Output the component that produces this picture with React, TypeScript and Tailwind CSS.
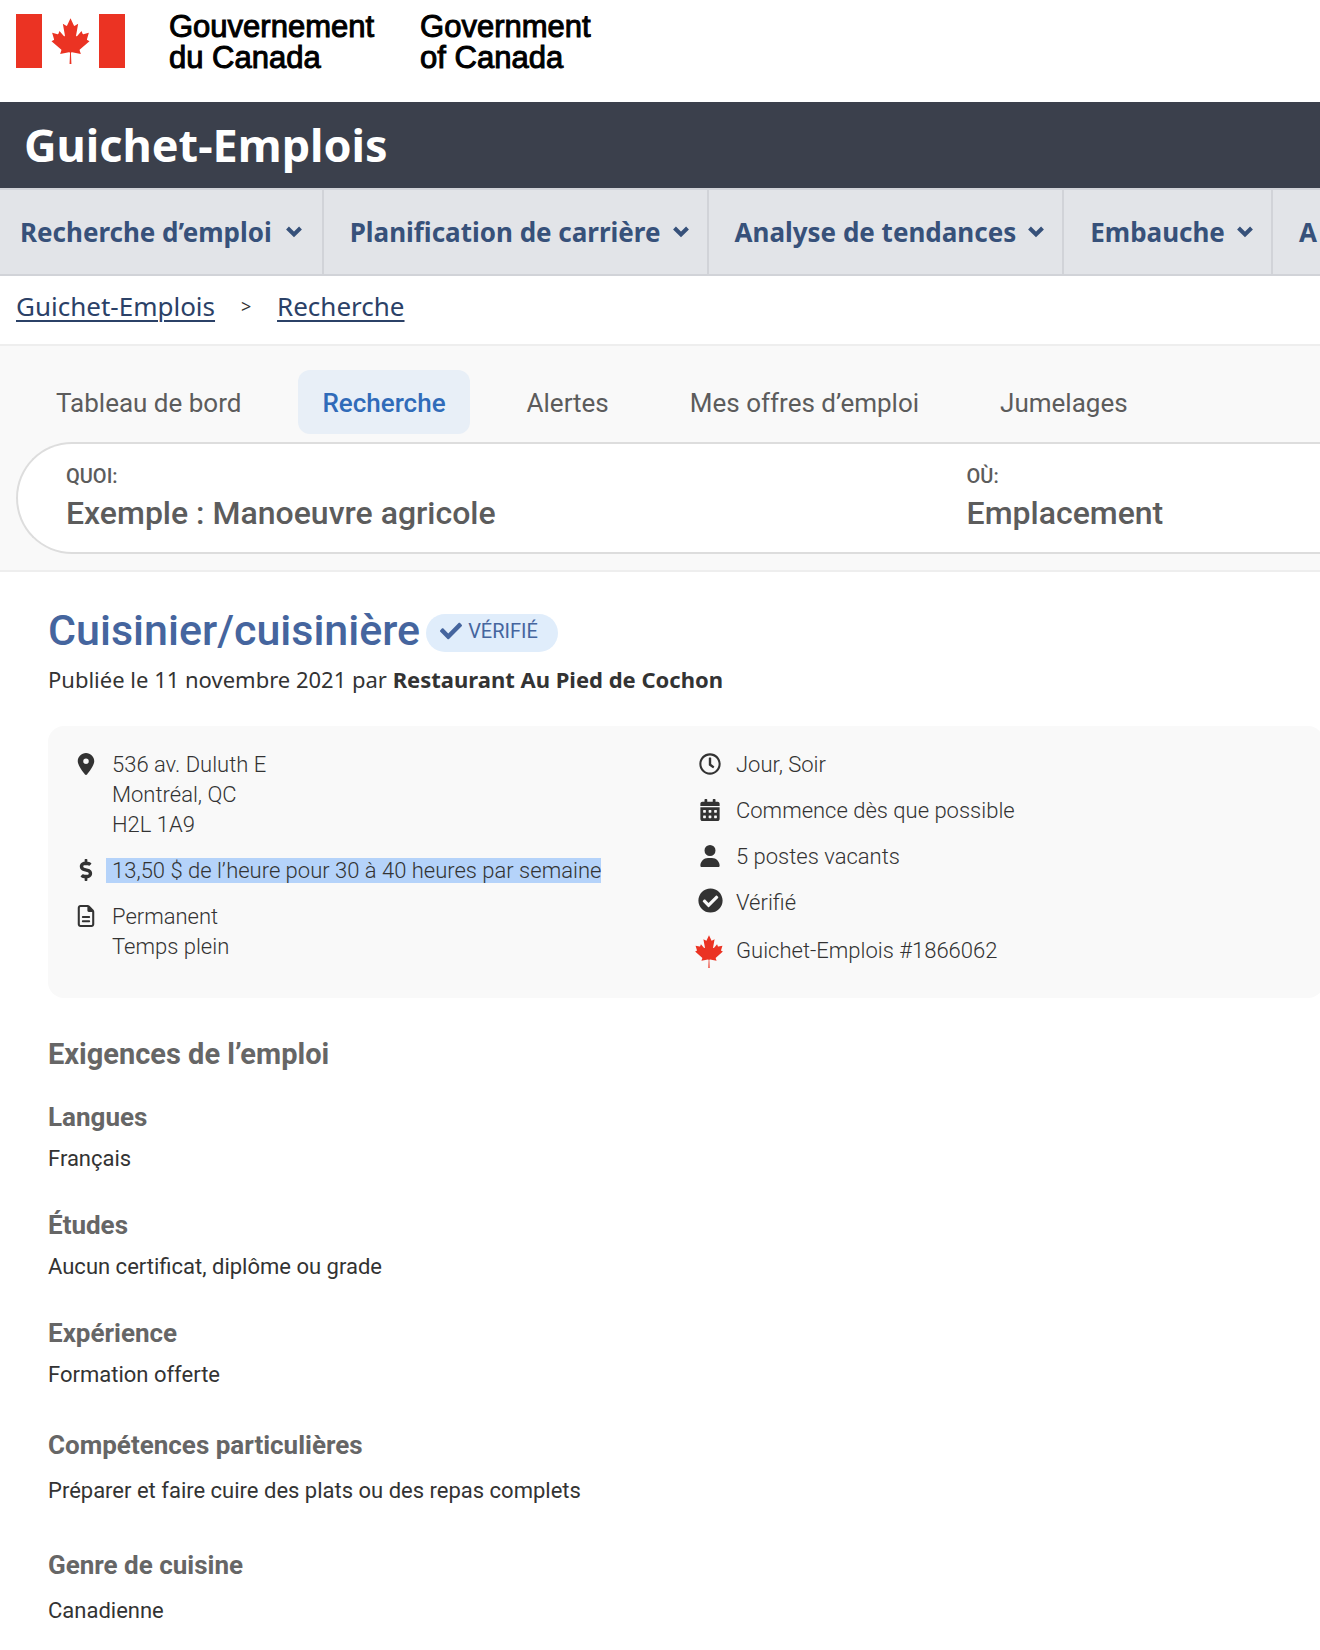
import type { ReactNode } from "react";
import {
  FaCalendarAlt,
  FaCheck,
  FaCheckCircle,
  FaDollarSign,
  FaRegClock,
} from "react-icons/fa";
import { FaLocationDot, FaRegFileLines, FaUser } from "react-icons/fa6";

function MapleLeaf({ className }: { className: string }) {
  return (
    <svg
      viewBox="-2010 -2030 4020 4160"
      preserveAspectRatio="none"
      className={className}
      fill="#eb3323"
      aria-hidden="true"
    >
      <path d="m-90 2130 45-963a95 95 0 0 0-111-98l-859 151 116-320a65 65 0 0 0-20-73l-941-762 212-99a65 65 0 0 0 34-79l-186-572 542 115a65 65 0 0 0 73-38l105-247 423 454a65 65 0 0 0 111-57l-204-1052 327 189a65 65 0 0 0 91-27l332-652 332 652a65 65 0 0 0 91 27l327-189-204 1052a65 65 0 0 0 111 57l423-454 105 247a65 65 0 0 0 73 38l542-115-186 572a65 65 0 0 0 34 79l212 99-941 762a65 65 0 0 0-20 73l116 320-859-151a95 95 0 0 0-111 98l45 963z" />
    </svg>
  );
}

function Chevron() {
  return (
    <svg viewBox="0 0 16 12" className="h-3 w-4 shrink-0" fill="none" stroke="currentColor" strokeWidth="4" aria-hidden="true">
      <path d="M1.5 2 8 8.5 14.5 2" />
    </svg>
  );
}

const menus = ["Recherche d’emploi", "Planification de carrière", "Analyse de tendances", "Embauche", "A"];
const tabs = ["Tableau de bord", "Recherche", "Alertes", "Mes offres d’emploi", "Jumelages"];

const requirements = [
  { title: "Langues", text: "Français", head: "mt-7", body: "mt-[11px]" },
  { title: "Études", text: "Aucun certificat, diplôme ou grade", head: "mt-[35px]", body: "mt-[11px]" },
  { title: "Expérience", text: "Formation offerte", head: "mt-[35px]", body: "mt-[11px]" },
  { title: "Compétences particulières", text: "Préparer et faire cuire des plats ou des repas complets", head: "mt-[39px]", body: "mt-[15px]" },
  { title: "Genre de cuisine", text: "Canadienne", head: "mt-[43px]", body: "mt-[15px]" },
];

function Detail({ icon, children }: { icon: ReactNode; children: ReactNode }) {
  return (
    <li className="flex gap-3">
      <span className="flex h-7 w-7 shrink-0 items-center justify-center">{icon}</span>
      <div>{children}</div>
    </li>
  );
}

function Field({ id, label, placeholder }: { id: string; label: string; placeholder: string }) {
  return (
    <div className="flex min-w-0 flex-col">
      <label htmlFor={id} className="text-[20px] leading-6 font-medium">
        {label}
      </label>
      <input
        id={id}
        type="text"
        placeholder={placeholder}
        className="mt-[5px] h-10 w-full bg-transparent text-[32px] leading-10 font-medium outline-none placeholder:text-[#5c5c5c] placeholder:opacity-100"
      />
    </div>
  );
}

export default function App() {
  return (
    <div className="min-h-screen overflow-x-hidden bg-white pb-6 font-['Roboto',sans-serif] text-[#333]">
      <header>
        <div className="flex h-[102px] items-start px-4 pt-[11px]">
          <div className="mt-[3px] flex h-[54px] w-[109px] items-center justify-between" role="img" aria-label="Drapeau du Canada">
            <span className="h-full w-[26px] bg-[#eb3323]" />
            <MapleLeaf className="h-[46px] w-[41px]" />
            <span className="h-full w-[26px] bg-[#eb3323]" />
          </div>
          <p className="ml-11 font-['Liberation_Sans',sans-serif] text-[31px] leading-[31px] text-black [-webkit-text-stroke:1px_black]">
            Gouvernement
            <br />
            du Canada
          </p>
          <p className="ml-[46px] font-['Liberation_Sans',sans-serif] text-[31px] leading-[31px] text-black [-webkit-text-stroke:1px_black]">
            Government
            <br />
            of Canada
          </p>
        </div>
        <div className="flex h-[86px] items-center bg-[#3b404c] px-6 font-['Noto_Sans',sans-serif] text-[45px] font-bold text-white">
          Guichet-Emplois
        </div>
        <nav aria-label="Menu principal" className="overflow-hidden border-y-2 border-[#d1d3d8] bg-[#e2e4e8]">
          <ul className="flex h-[84px] w-max font-['Noto_Sans',sans-serif] text-[26px] font-bold text-[#37517a]">
            {menus.map((m, i) => (
              <li key={m} className={i === 0 ? "" : "border-l-2 border-[#d1d3d8]"}>
                <button type="button" className={i === 0 ? "flex h-full items-center gap-[14px] pr-5 pl-5" : "flex h-full items-center gap-3 pr-[18px] pl-[26px]"}>
                  {m}
                  <Chevron />
                </button>
              </li>
            ))}
          </ul>
        </nav>
      </header>

      <nav aria-label="Fil d’Ariane" className="flex h-[68px] items-center px-4 pb-2 font-['Noto_Sans',sans-serif] text-[26px] text-[#2b4167]">
        <a href="#accueil" className="underline decoration-2 underline-offset-4">Guichet-Emplois</a>
        <span className="w-[62px] text-center text-[18px] text-[#333]">&gt;</span>
        <a href="#recherche" className="underline decoration-2 underline-offset-4">Recherche</a>
      </nav>

      <section className="border-y-2 border-[#eee] bg-[#f9f9f9] pt-6 pb-4 pl-4 text-[#5c5c5c]">
        <ul className="flex gap-[33px] pl-4 text-[26px]">
          {tabs.map((t) => (
            <li key={t}>
              <button
                type="button"
                className={
                  t === "Recherche"
                    ? "h-16 rounded-xl bg-[#e8eff7] px-6 pt-[2px] font-medium text-[#306bb9]"
                    : "h-16 rounded-xl px-6 pt-[2px]"
                }
              >
                {t}
              </button>
            </li>
          ))}
        </ul>
        <form className="mt-2 grid h-28 grid-cols-[79fr_31fr] rounded-l-full border-2 border-r-0 border-[#ddd] bg-white pt-5 pl-12">
          <Field id="quoi" label="QUOI:" placeholder="Exemple : Manoeuvre agricole" />
          <Field id="ou" label="OÙ:" placeholder="Emplacement" />
        </form>
      </section>

      <main className="pl-12">
        <div className="flex items-center gap-[6px] pt-[31px]">
          <h1 className="text-[43px] leading-[54px] font-medium text-[#45659e]">Cuisinier/cuisinière</h1>
          <span className="mt-[6px] flex h-[38px] items-center gap-[6px] rounded-full bg-[#e0edfb] pr-5 pb-1 pl-[14px] text-[20px] text-[#45659e]">
            <FaCheck className="text-[22px]" />
            VÉRIFIÉ
          </span>
        </div>
        <p className="mt-[6px] font-['Noto_Sans',sans-serif] text-[22px] leading-8">
          Publiée le 11 novembre 2021 par <strong className="font-bold">Restaurant Au Pied de Cochon</strong>
        </p>

        <section className="mt-[31px] -mr-1 grid grid-cols-2 rounded-2xl bg-[#f9f9f9] pt-6 pr-1 pb-[30px] pl-6 text-[22px] leading-[30px] font-light">
          <ul className="flex flex-col gap-4">
            <Detail icon={<FaLocationDot className="text-[22px]" />}>
              536 av. Duluth E
              <br />
              Montréal, QC
              <br />
              H2L 1A9
            </Detail>
            <Detail icon={<FaDollarSign className="text-[22px]" />}>
              <span className="-ml-[6px] bg-[#b5d3fa] pl-[6px]">13,50 $ de l’heure pour 30 à 40 heures par semaine</span>
            </Detail>
            <Detail icon={<FaRegFileLines className="text-[22px]" />}>
              Permanent
              <br />
              Temps plein
            </Detail>
          </ul>
          <ul className="flex flex-col gap-4">
            <Detail icon={<FaRegClock className="text-[22px]" />}>Jour, Soir</Detail>
            <Detail icon={<FaCalendarAlt className="text-[22px]" />}>Commence dès que possible</Detail>
            <Detail icon={<FaUser className="text-[22px]" />}>5 postes vacants</Detail>
            <Detail icon={<FaCheckCircle className="self-start text-[25px]" />}>Vérifié</Detail>
            <li className="flex h-[34px] items-center gap-3">
              <span className="flex w-7 shrink-0 justify-end">
                <MapleLeaf className="h-[33px] w-[30px] shrink-0" />
              </span>
              Guichet-Emplois #1866062
            </li>
          </ul>
        </section>

        <h2 className="mt-9 text-[29px] leading-10 font-bold text-[#666]">
          Exigences de l’emploi
        </h2>
        {requirements.map((r) => (
          <section key={r.title} className={r.head}>
            <h3 className="text-[26px] leading-[30px] font-bold text-[#666]">{r.title}</h3>
            <p className={`${r.body} text-[22px] leading-8`}>{r.text}</p>
          </section>
        ))}
      </main>
    </div>
  );
}
